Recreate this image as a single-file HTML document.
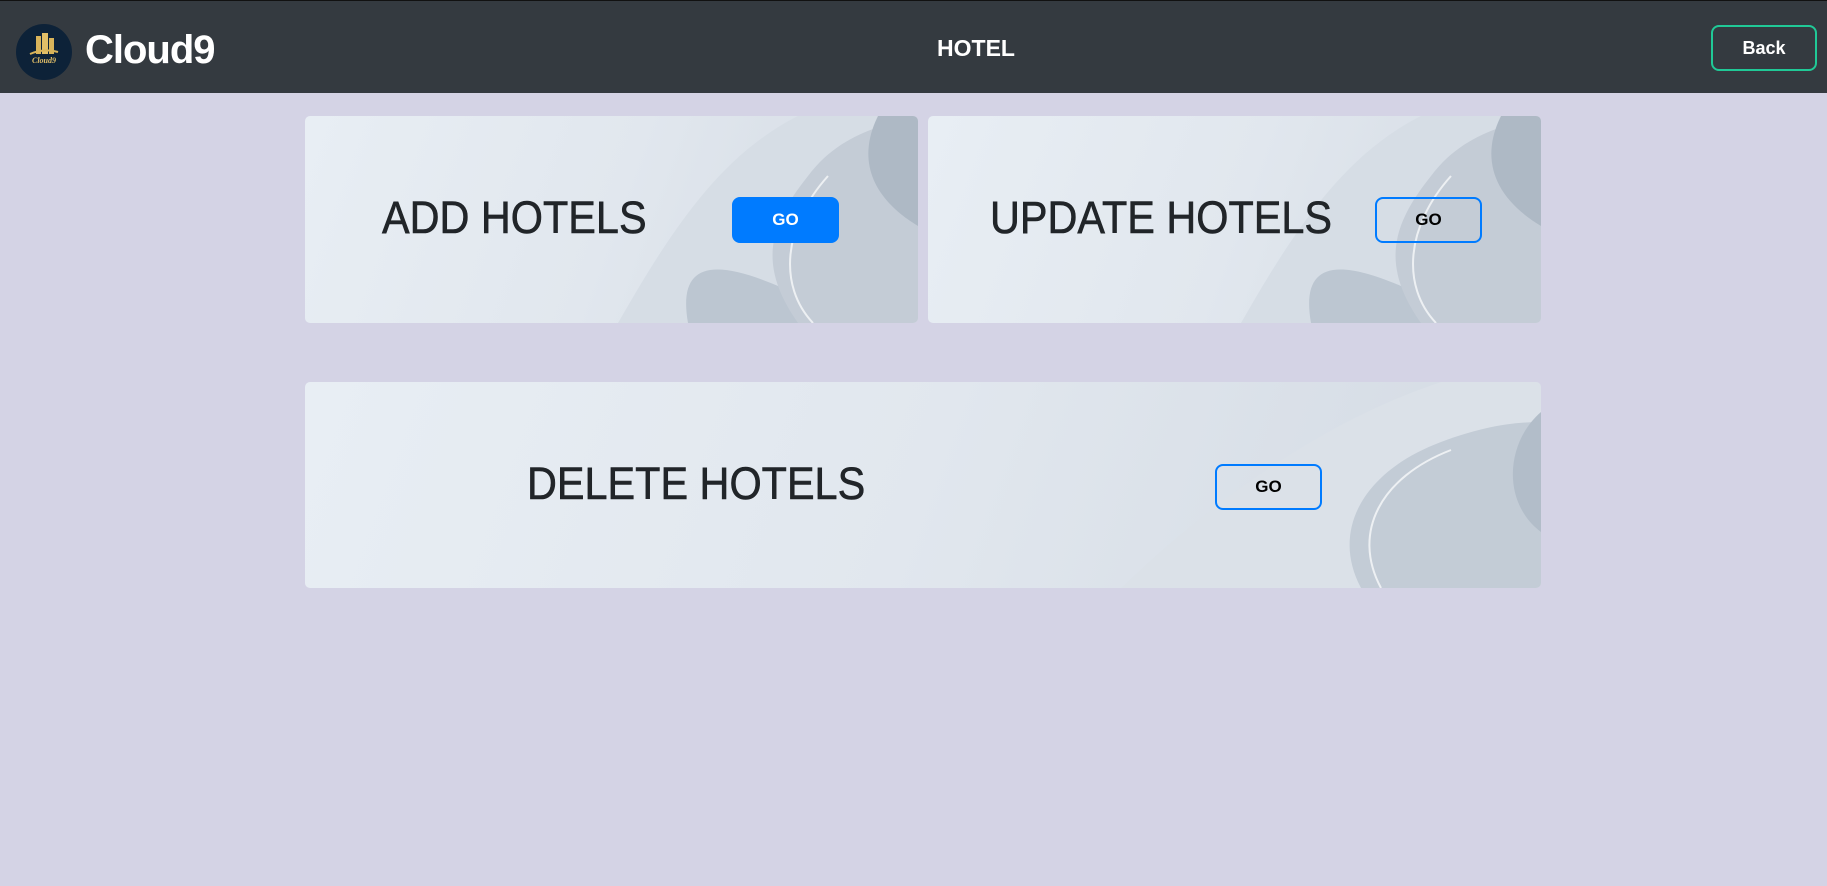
<!DOCTYPE html>
<html><head><meta charset="utf-8"><style>
*{margin:0;padding:0;box-sizing:border-box}
body{width:1827px;height:886px;background:#d4d3e5;font-family:"Liberation Sans",sans-serif;position:relative;overflow:hidden}
.nav{position:absolute;left:0;top:0;width:1827px;height:93px;background:#343a40;border-top:1px solid #111}
.logo{position:absolute;left:16px;top:23px;width:56px;height:56px;border-radius:50%;background:#0d2238}
.brand{position:absolute;left:85px;top:27px;color:#fff;font-weight:bold;font-size:40px;letter-spacing:-1px}
.title{position:absolute;left:0;width:1952px;top:34px;text-align:center;color:#fff;font-weight:bold;font-size:23px}
.back{position:absolute;left:1711px;top:24px;width:106px;height:46px;border:2px solid #20c997;border-radius:8px;color:#fff;font-weight:bold;font-size:18px;text-align:center;line-height:42px}
.card{position:absolute;border-radius:5px;overflow:hidden;background:linear-gradient(110deg,#e8eef4 0%,#e1e7ee 50%,#d3dae3 100%)}
.card svg{position:absolute;right:0;top:0}
.t{position:absolute;color:#212529;font-size:45px;white-space:nowrap;transform:scaleX(.92);transform-origin:left center;-webkit-text-stroke:0.6px #212529}
.go{position:absolute;width:107px;height:46px;border:2px solid #007bff;border-radius:8px;font-weight:bold;font-size:17px;text-align:center;line-height:42px;color:#000}
.go.f{background:#007bff;color:#fff}
</style></head><body>
<div class="nav">
 <div class="logo"><svg width="56" height="56" viewBox="0 0 56 56"><rect x="20" y="12" width="5" height="18" fill="#d9b45a"/><rect x="26" y="9" width="6" height="21" fill="#e2bf68"/><rect x="33" y="14" width="5" height="16" fill="#d9b45a"/><path d="M14 30 Q28 24 42 28" stroke="#d9b45a" stroke-width="2" fill="none"/><text x="28" y="39" font-size="8" fill="#e2bf68" text-anchor="middle" font-style="italic" font-weight="bold" font-family="Liberation Serif">Cloud9</text></svg></div>
 <div class="brand">Cloud9</div>
 <div class="title">HOTEL</div>
 <div class="back">Back</div>
</div>

<div class="card" style="left:305px;top:116px;width:613px;height:207px">
 <svg width="340" height="207" viewBox="0 0 340 207"><path d="M40 207 C90 120 140 40 220 0 L340 0 L340 207Z" fill="#d6dde5"/><path d="M110 207 C100 150 130 140 200 170 C250 185 280 200 300 207Z" fill="#bcc6d1"/><path d="M220 207 C180 150 190 110 230 60 C260 20 300 10 340 0 L340 207Z" fill="#c4ccd6"/><path d="M300 0 C280 40 290 80 340 110 L340 0Z" fill="#aeb9c5"/><path d="M235 207 C200 170 205 110 250 60" stroke="#fff" stroke-width="2" fill="none" opacity=".7"/></svg>
 <div class="t" style="left:77px;top:76px">ADD HOTELS</div>
 <div class="go f" style="left:427px;top:81px">GO</div>
</div>
<div class="card" style="left:928px;top:116px;width:613px;height:207px">
 <svg width="340" height="207" viewBox="0 0 340 207"><path d="M40 207 C90 120 140 40 220 0 L340 0 L340 207Z" fill="#d6dde5"/><path d="M110 207 C100 150 130 140 200 170 C250 185 280 200 300 207Z" fill="#bcc6d1"/><path d="M220 207 C180 150 190 110 230 60 C260 20 300 10 340 0 L340 207Z" fill="#c4ccd6"/><path d="M300 0 C280 40 290 80 340 110 L340 0Z" fill="#aeb9c5"/><path d="M235 207 C200 170 205 110 250 60" stroke="#fff" stroke-width="2" fill="none" opacity=".7"/></svg>
 <div class="t" style="left:62px;top:76px">UPDATE HOTELS</div>
 <div class="go" style="left:447px;top:81px">GO</div>
</div>
<div class="card" style="left:305px;top:382px;width:1236px;height:206px">
 <svg width="480" height="206" viewBox="0 0 480 206"><path d="M60 206 C150 120 260 40 380 0 L480 0 L480 206Z" fill="#dbe1e8"/><path d="M300 206 C270 150 300 90 380 60 C420 45 450 40 480 40 L480 206Z" fill="#c3ccd6"/><path d="M320 206 C290 150 320 95 390 68" stroke="#fff" stroke-width="2" fill="none" opacity=".7"/><path d="M480 30 C445 60 440 120 480 150Z" fill="#b2bdc9"/></svg>
 <div class="t" style="left:222px;top:76px">DELETE HOTELS</div>
 <div class="go" style="left:910px;top:82px">GO</div>
</div>
</body></html>
